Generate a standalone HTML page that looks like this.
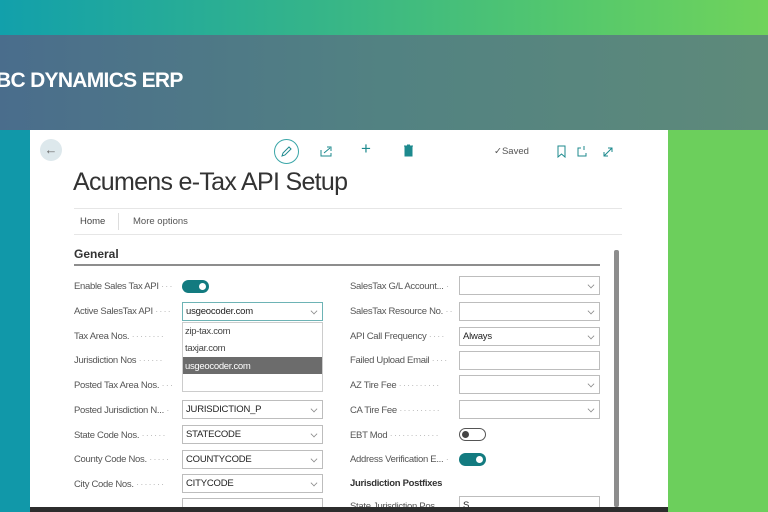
<!DOCTYPE html>
<html><head><style>
*{margin:0;padding:0;box-sizing:border-box}
html,body{width:768px;height:512px;overflow:hidden}
body{position:relative;font-family:"Liberation Sans",sans-serif;background:#6ccf5c}
.a{position:absolute}
.lbl{position:absolute;font-size:9.5px;color:#555;white-space:nowrap;letter-spacing:-0.3px}
.dots{color:#bbb;letter-spacing:1px}
.in{position:absolute;height:19px;border:1px solid #bdbdbd;background:#fff;font-size:9.5px;color:#222;padding:3px 3px;letter-spacing:-0.2px;overflow:hidden}
.chev{position:absolute;right:5px;top:5px;width:6px;height:6px;border-right:1px solid #888;border-bottom:1px solid #888;transform:rotate(45deg) scale(.8)}
.tog{position:absolute;width:27px;height:13px;border-radius:7px;background:#137b80}
.tog::after{content:"";position:absolute;right:3px;top:3px;width:7px;height:7px;border-radius:50%;background:#fff}
</style></head><body>
<div class="a" style="left:0;top:0;width:768px;height:35px;background:linear-gradient(90deg,#12a0ab,#34b48a 40%,#55c86c 75%,#70d35b)"></div>
<div class="a" style="left:0;top:35px;width:768px;height:95px;background:linear-gradient(90deg,#4a6d8c,#528282 50%,#5e8a7a)"></div>
<div class="a" style="left:-4px;top:69px;font-size:21px;font-weight:bold;color:#fff;letter-spacing:-0.7px">BC DYNAMICS ERP</div>
<div class="a" style="left:0;top:130px;width:30px;height:382px;background:#1198a9"></div>
<div class="a" style="left:30px;top:130px;width:638px;height:382px;background:#fff;overflow:hidden">
<div class="a" style="left:10px;top:9px;width:22px;height:22px;border-radius:50%;background:#dde8ec;color:#666;font-size:13px;text-align:center;line-height:21px">←</div>
<div class="a" style="left:244px;top:9px;width:25px;height:25px;border-radius:50%;border:1px solid #3aa6a8"></div>
<svg class="a" style="left:250px;top:15px" width="13" height="13" viewBox="0 0 13 13"><path d="M2 11 L3 8 L9 2 L11 4 L5 10 Z" fill="none" stroke="#1d8a8e" stroke-width="1"/></svg>
<svg class="a" style="left:290px;top:15px" width="12" height="12"><path d="M1 5v6h10V8M4 8l6-5M7 2h4v4" fill="none" stroke="#1d8a8e"/></svg>
<div class="a" style="left:331px;top:9px;font-size:17px;color:#1d8a8e">+</div>
<svg class="a" style="left:373px;top:14px" width="11" height="13"><path d="M1 2h9M4 1h3M2 3h7v9H2z" fill="#1d8a8e" stroke="#1d8a8e"/></svg>
<div class="a" style="left:464px;top:16px;font-size:9.5px;color:#555">✓Saved</div>
<svg class="a" style="left:527px;top:15px" width="60" height="13"><path d="M1 1h7v11l-3.5-3L1 12z" fill="none" stroke="#1d8a8e"/><path d="M24 3h-3v8h8V8M27 1v4" fill="none" stroke="#1d8a8e"/><path d="M47 11l8-8M47 7v4h4M55 7V3h-4" fill="none" stroke="#1d8a8e"/></svg>
<div class="a" style="left:43px;top:38px;font-size:25px;color:#333;letter-spacing:-0.7px">Acumens e-Tax API Setup</div>
<div class="a" style="left:44px;top:78px;width:548px;height:1px;background:#e6e6e6"></div>
<div class="a" style="left:50px;top:86px;font-size:9.5px;color:#444">Home</div>
<div class="a" style="left:88px;top:83px;width:1px;height:17px;background:#ddd"></div>
<div class="a" style="left:103px;top:86px;font-size:9.5px;color:#555">More options</div>
<div class="a" style="left:44px;top:104px;width:548px;height:1px;background:#e6e6e6"></div>
<div class="a" style="left:44px;top:117px;font-size:12px;color:#333;font-weight:bold">General</div>
<div class="a" style="left:44px;top:134px;width:526px;height:2px;background:#8d8d8d"></div>
<div class="a" style="left:584px;top:120px;width:5px;height:257px;background:#8d8d8d;border-radius:2px"></div>

<div class="lbl" style="left:44px;top:151px">Enable Sales Tax API <span class="dots">···</span></div>
<div class="tog" style="left:152px;top:150px"></div>
<div class="lbl" style="left:44px;top:176px">Active SalesTax API <span class="dots">····</span></div>
<div class="in" style="left:152px;top:172px;width:141px;border-color:#6db3b5">usgeocoder.com<i class="chev"></i></div>
<div class="lbl" style="left:44px;top:201px">Tax Area Nos. <span class="dots">········</span></div>
<div class="lbl" style="left:44px;top:225px">Jurisdiction Nos <span class="dots">······</span></div>
<div class="lbl" style="left:44px;top:250px">Posted Tax Area Nos. <span class="dots">···</span></div>
<div class="lbl" style="left:44px;top:275px">Posted Jurisdiction N... <span class="dots">·</span></div>
<div class="in" style="left:152px;top:270px;width:141px">JURISDICTION_P<i class="chev"></i></div>
<div class="lbl" style="left:44px;top:300px">State Code Nos. <span class="dots">······</span></div>
<div class="in" style="left:152px;top:295px;width:141px">STATECODE<i class="chev"></i></div>
<div class="lbl" style="left:44px;top:324px">County Code Nos. <span class="dots">·····</span></div>
<div class="in" style="left:152px;top:320px;width:141px">COUNTYCODE<i class="chev"></i></div>
<div class="lbl" style="left:44px;top:349px">City Code Nos. <span class="dots">·······</span></div>
<div class="in" style="left:152px;top:344px;width:141px">CITYCODE<i class="chev"></i></div>
<div class="in" style="left:152px;top:368px;width:141px"></div>

<div class="a" style="left:152px;top:192px;width:141px;height:70px;background:#fff;border:1px solid #ccc"></div>
<div class="lbl" style="left:155px;top:196px;color:#444">zip-tax.com</div>
<div class="lbl" style="left:155px;top:213px;color:#444">taxjar.com</div>
<div class="a" style="left:153px;top:227px;width:139px;height:17px;background:#6c6c6c"></div>
<div class="lbl" style="left:155px;top:231px;color:#fff">usgeocoder.com</div>

<div class="lbl" style="left:320px;top:151px">SalesTax G/L Account... <span class="dots">·</span></div>
<div class="in" style="left:429px;top:146px;width:141px"><i class="chev"></i></div>
<div class="lbl" style="left:320px;top:176px">SalesTax Resource No. <span class="dots">··</span></div>
<div class="in" style="left:429px;top:172px;width:141px"><i class="chev"></i></div>
<div class="lbl" style="left:320px;top:201px">API Call Frequency <span class="dots">····</span></div>
<div class="in" style="left:429px;top:197px;width:141px">Always<i class="chev"></i></div>
<div class="lbl" style="left:320px;top:225px">Failed Upload Email <span class="dots">····</span></div>
<div class="in" style="left:429px;top:221px;width:141px"></div>
<div class="lbl" style="left:320px;top:250px">AZ Tire Fee <span class="dots">··········</span></div>
<div class="in" style="left:429px;top:245px;width:141px"><i class="chev"></i></div>
<div class="lbl" style="left:320px;top:275px">CA Tire Fee <span class="dots">··········</span></div>
<div class="in" style="left:429px;top:270px;width:141px"><i class="chev"></i></div>
<div class="lbl" style="left:320px;top:300px">EBT Mod <span class="dots">············</span></div>
<div class="a" style="left:429px;top:298px;width:27px;height:13px;border-radius:7px;border:1px solid #555;background:#fff"><div style="position:absolute;left:2px;top:2px;width:7px;height:7px;border-radius:50%;background:#444"></div></div>
<div class="lbl" style="left:320px;top:324px">Address Verification E... <span class="dots">·</span></div>
<div class="tog" style="left:429px;top:323px"></div>
<div class="lbl" style="left:320px;top:348px;font-weight:bold;color:#333">Jurisdiction Postfixes</div>
<div class="lbl" style="left:320px;top:371px">State Jurisdiction Pos...</div>
<div class="in" style="left:429px;top:366px;width:141px">S</div>
<div class="a" style="left:0;top:377px;width:638px;height:5px;background:#2d2d2d"></div>
</div>
</body></html>
